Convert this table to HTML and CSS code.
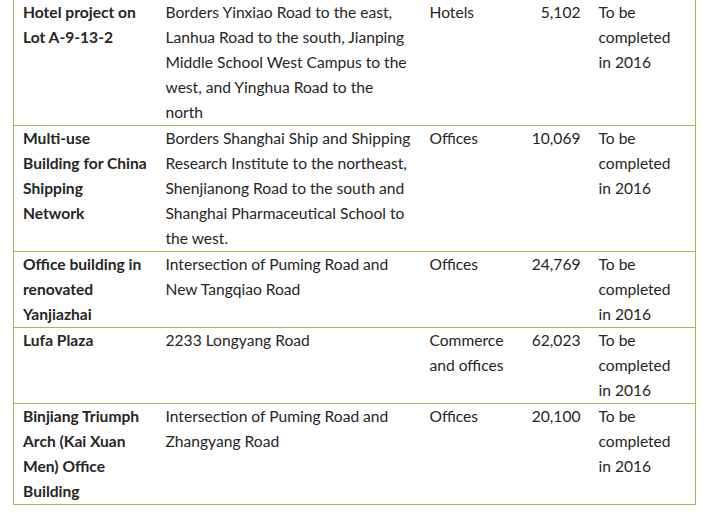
FILE: index.html
```html
<!DOCTYPE html>
<html>
<head>
<meta charset="utf-8">
<link rel="stylesheet" href="styles.css">
</head>
<body>
<table class="projects">
  <colgroup>
    <col class="c-name">
    <col class="c-loc">
    <col class="c-use">
    <col class="c-area">
    <col class="c-status">
  </colgroup>
  <tbody>
    <tr>
      <td class="name">Hotel project on Lot A-9-13-2</td>
      <td>Borders Yinxiao Road to the east, Lanhua Road to the south, Jianping Middle School West Campus to the west, and Yinghua Road to the north</td>
      <td>Hotels</td>
      <td class="num">5,102</td>
      <td class="status">To be completed in 2016</td>
    </tr>
    <tr>
      <td class="name">Multi-use Building for China Shipping Network</td>
      <td>Borders Shanghai Ship and Shipping Research Institute to the northeast, Shenjianong Road to the south and Shanghai Pharmaceutical School to the west.</td>
      <td>Offices</td>
      <td class="num">10,069</td>
      <td class="status">To be completed in 2016</td>
    </tr>
    <tr>
      <td class="name">Office building in renovated Yanjiazhai</td>
      <td>Intersection of Puming Road and New Tangqiao Road</td>
      <td>Offices</td>
      <td class="num">24,769</td>
      <td class="status">To be completed in 2016</td>
    </tr>
    <tr>
      <td class="name">Lufa Plaza</td>
      <td>2233 Longyang Road</td>
      <td>Commerce and offices</td>
      <td class="num">62,023</td>
      <td class="status">To be completed in 2016</td>
    </tr>
    <tr>
      <td class="name">Binjiang Triumph Arch (Kai Xuan Men) Office Building</td>
      <td>Intersection of Puming Road and Zhangyang Road</td>
      <td>Offices</td>
      <td class="num">20,100</td>
      <td class="status">To be completed in 2016</td>
    </tr>
  </tbody>
</table>
</body>
</html>
```
FILE: styles.css
```css
html, body {
  margin: 0;
  padding: 0;
  background: #ffffff;
}

body {
  font-family: Lato, "Open Sans", sans-serif;
  font-size: 15.6px;
  line-height: 25px;
  color: #262626;
}

.projects {
  margin: 0 0 0 13px;
  width: 682px;
  table-layout: fixed;
  border-collapse: collapse;
  border-left: 1px solid #9bbb59;
  border-right: 1px solid #9bbb59;
}

.c-name { width: 143px; }
.c-loc { width: 264px; }
.c-use { width: 95px; }
.c-area { width: 74px; }
.c-status { width: 106px; }

.projects td {
  vertical-align: top;
  padding: 0 9px;
  border-top: 1px solid #9bbb59;
  border-bottom: 1px solid #9bbb59;
}

.projects tr:first-child td {
  border-top: none;
}

.projects td.name {
  font-weight: bold;
}

.projects td.num {
  text-align: right;
}

.projects td.status {
  padding-right: 14px;
}
```
